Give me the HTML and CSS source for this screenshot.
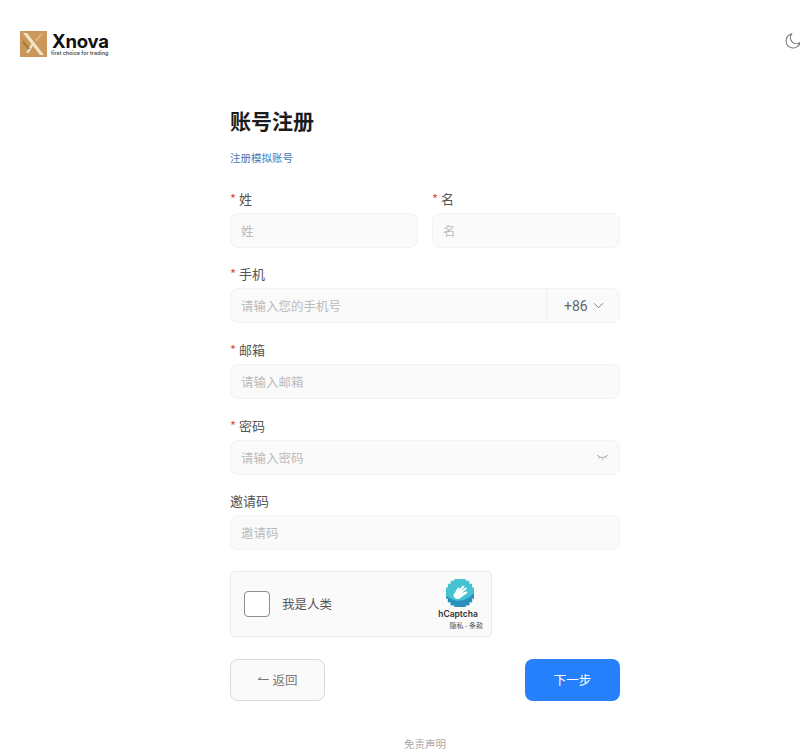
FILE: index.html
```html
<!DOCTYPE html>
<html lang="zh-CN">
<head>
<meta charset="utf-8">
<title>账号注册</title>
<link rel="stylesheet" href="styles.css">
</head>
<body>
<header class="topbar">
  <div class="brand">
    <svg class="brand-mark" viewBox="0 0 27 26" width="27" height="26" aria-hidden="true">
      <rect width="27" height="26" fill="#c9985a"/>
      <path d="M3 2 L7 2 L24 24 L20 24 Z" fill="#f3e4cc"/>
      <path d="M6 22 L12 12 L13.500 14 L8.500 22 Z" fill="#f3e4cc"/>
      <path d="M15 9 L21 2 L23.500 2 L16.500 11 Z" fill="#dcb27c"/>
      <path d="M3 9 L10 18 L7.500 18 L3 12.500 Z" fill="#a87838"/>
    </svg>
    <div class="brand-text">
      <div class="brand-name">Xnova</div>
      <div class="brand-tag">first choice for trading</div>
    </div>
  </div>
  <svg class="theme-icon" viewBox="0 0 24 24" width="18" height="18" aria-hidden="true">
    <path d="M10.500 2.500 A9.500 9.500 0 1 0 21.500 14 A8 8 0 0 1 10.500 2.500 Z" fill="none" stroke="#777" stroke-width="1.500" stroke-linejoin="round"/>
  </svg>
</header>

<main class="panel">
  <h1 class="title">账号注册</h1>
  <a class="sub-link">注册模拟账号</a>

  <div class="name-row">
    <div class="field">
      <label class="label"><span class="req">*</span>姓</label>
      <div class="control"><span class="ph">姓</span></div>
    </div>
    <div class="field">
      <label class="label"><span class="req">*</span>名</label>
      <div class="control"><span class="ph">名</span></div>
    </div>
  </div>

  <div class="field">
    <label class="label"><span class="req">*</span>手机</label>
    <div class="control control-phone">
      <span class="ph">请输入您的手机号</span>
      <div class="dial">
        <span>+86</span>
        <svg viewBox="0 0 12 8" width="11" height="7" aria-hidden="true"><path d="M1 1.500 L6 6.500 L11 1.500" fill="none" stroke="#777" stroke-width="1.100"/></svg>
      </div>
    </div>
  </div>

  <div class="field">
    <label class="label"><span class="req">*</span>邮箱</label>
    <div class="control"><span class="ph">请输入邮箱</span></div>
  </div>

  <div class="field">
    <label class="label"><span class="req">*</span>密码</label>
    <div class="control control-pass">
      <span class="ph">请输入密码</span>
      <svg viewBox="0 0 14 8" width="13" height="7" aria-hidden="true"><path d="M1 1.500 Q7 6.500 13 1.500 M3.500 3.800 L2.500 5.200 M7 5 L7 6.800 M10.500 3.800 L11.500 5.200" fill="none" stroke="#999" stroke-width="1"/></svg>
    </div>
  </div>

  <div class="field">
    <label class="label">邀请码</label>
    <div class="control"><span class="ph">邀请码</span></div>
  </div>

  <div class="captcha">
    <div class="captcha-check"></div>
    <span class="captcha-text">我是人类</span>
    <div class="captcha-brand">
      <svg viewBox="0 0 30 30" width="28" height="28" aria-hidden="true">
        <path d="M9 0 H21 V2 H25 V5 H28 V9 H30 V21 H28 V25 H25 V28 H21 V30 H9 V28 H5 V25 H2 V21 H0 V9 H2 V5 H5 V2 H9 Z" fill="#45c3d0"/>
        <path d="M2 19 H0 V21 H2 V25 H5 V28 H9 V30 H21 V28 H25 V25 H28 V21 H30 V15 C22 24 10 26 2 19 Z" fill="#2a8fbd"/>
        <path d="M8 17 L13 9 L15 10 L13 13 L18 7 L20 8 L16 13 L21 9 L22.500 10.500 L17 15 L22 13 L23 15 L17 19 C14 23 8 22 8 17 Z" fill="#fff"/>
      </svg>
      <div class="captcha-name">hCaptcha</div>
      <div class="captcha-links">隐私 - 条款</div>
    </div>
  </div>

  <div class="actions">
    <button class="btn btn-back" type="button">
      <svg viewBox="0 0 14 8" width="13" height="7" aria-hidden="true"><path d="M1 4 H13 M1 4 L4 1.500" fill="none" stroke="#777" stroke-width="1.200"/></svg>
      返回
    </button>
    <button class="btn btn-next" type="button">下一步</button>
  </div>

  <footer class="disclaimer">免责声明</footer>
</main>
</body>
</html>
```
FILE: styles.css
```css
* { box-sizing: border-box; }
html, body { margin: 0; padding: 0; }
body {
  width: 800px;
  height: 756px;
  overflow: hidden;
  background: #fff;
  color: #333;
  font-family: "Noto Sans CJK SC", "Noto Sans", sans-serif;
}
.topbar {
  display: flex;
  justify-content: space-between;
  align-items: flex-start;
  height: 96px;
  padding: 31px 0 0 20px;
}
.brand { display: flex; align-items: center; gap: 5px; }
.brand-mark { display: block; }
.brand-text { display: flex; flex-direction: column; }
.brand-name {
  font-family: "Inter", "Liberation Sans", sans-serif;
  font-weight: 700;
  font-size: 18.500px;
  line-height: 18px;
  color: #111;
  letter-spacing: -0.2px;
}
.brand-tag {
  font-family: "Inter", "Liberation Sans", sans-serif;
  font-weight: 500;
  font-size: 5.400px;
  line-height: 7px;
  margin-left: -1px;
  color: #333;
  white-space: nowrap;
}
.theme-icon { margin: 1px -2px 0 0; }
.panel { width: 390px; margin-left: 230px; }
.title {
  margin: 0;
  padding-top: 9px;
  height: 39px;
  font-size: 21px;
  line-height: 30px;
  font-weight: 700;
  color: #1c1c1c;
}
.sub-link {
  display: block;
  margin-top: 13.500px;
  height: 18px;
  font-size: 10.500px;
  line-height: 18px;
  color: #3d78b8;
}
.name-row {
  display: grid;
  grid-template-columns: 188px 188px;
  column-gap: 14px;
  margin-top: 22px;
}
.field { height: 75.700px; }
.label {
  display: block;
  height: 24px;
  font-size: 13px;
  line-height: 20px;
  color: #555;
}
.req { color: #d9534f; margin-right: 3px; font-size: 13px; }
.control {
  height: 35px;
  padding: 0 10px;
  border: 1px solid #f2f2f2;
  border-radius: 8px;
  background: #fafafa;
  display: flex;
  align-items: center;
  justify-content: space-between;
}
.ph { font-size: 12.500px; color: #bbb; }
.control-phone { padding-right: 0; }
.dial {
  display: flex;
  align-items: center;
  gap: 5px;
  height: 100%;
  width: 73px;
  padding-left: 17px;
  border-left: 1px solid #f0f0f0;
  font-family: "Roboto", "Noto Sans", sans-serif;
  font-size: 14px;
  color: #666;
}
.captcha {
  display: flex;
  align-items: center;
  position: relative;
  width: 262px;
  height: 66px;
  margin-top: 4px;
  padding-left: 13px;
  border: 1px solid #ececec;
  border-radius: 4px;
  background: #fafafa;
}
.captcha-check {
  width: 26px;
  height: 26px;
  border: 1px solid #8f8f8f;
  border-radius: 4px;
  background: #fff;
}
.captcha-text { margin-left: 12px; font-size: 12.500px; color: #555; }
.captcha-brand {
  position: absolute;
  right: 8px;
  top: 7px;
  width: 46px;
  display: flex;
  flex-direction: column;
  align-items: center;
}
.captcha-name {
  margin-top: 1px;
  margin-left: -4px;
  font-family: "Inter", "Liberation Sans", sans-serif;
  font-weight: 600;
  font-size: 8.500px;
  line-height: 12px;
  color: #333;
  white-space: nowrap;
}
.captcha-links {
  font-size: 7px;
  line-height: 10px;
  color: #555;
  align-self: flex-end;
  white-space: nowrap;
}
.actions {
  display: flex;
  justify-content: space-between;
  margin-top: 22px;
}
.btn {
  width: 95px;
  height: 42px;
  border-radius: 8px;
  font-family: inherit;
  font-size: 12.500px;
  display: flex;
  align-items: center;
  justify-content: center;
  gap: 2px;
}
.btn-back { background: #fafafa; border: 1px solid #d9d9d9; color: #777; }
.btn-next { background: #2680fb; border: 0; color: #fff; }
.disclaimer {
  margin-top: 35px;
  text-align: center;
  font-size: 10.500px;
  line-height: 16px;
  color: #aaa;
}
```
